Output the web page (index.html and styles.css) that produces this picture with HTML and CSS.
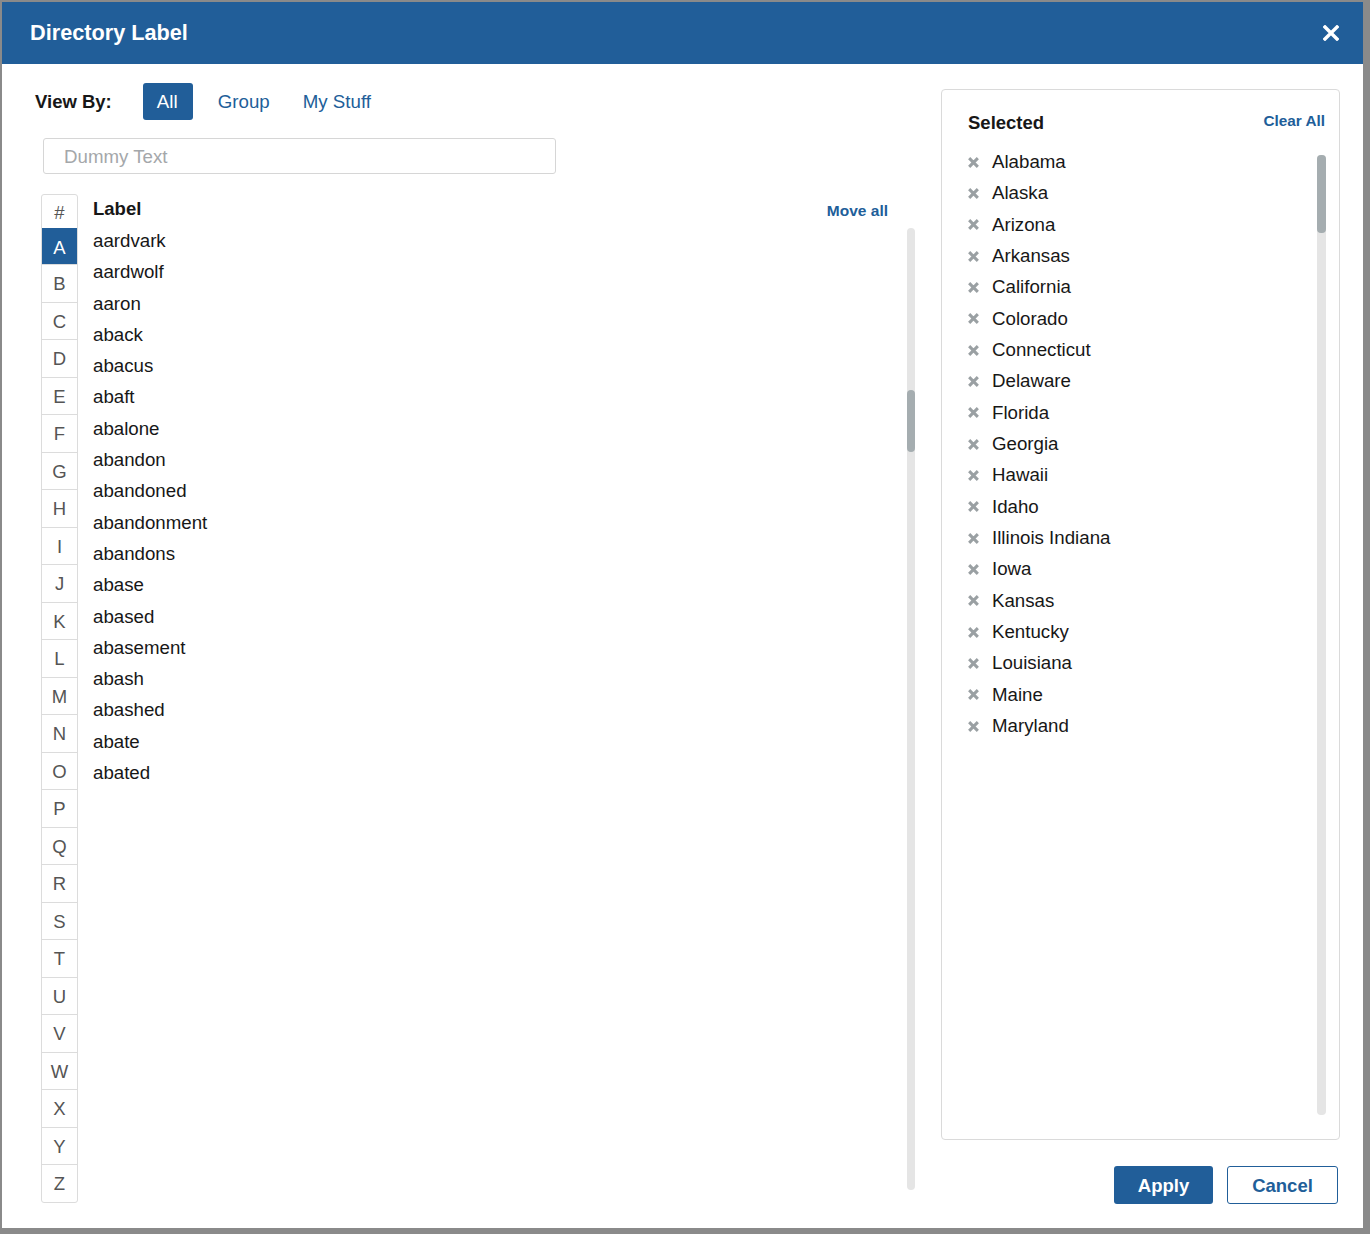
FILE: index.html
```html
<!DOCTYPE html>
<html>
<head>
<meta charset="utf-8">
<link rel="stylesheet" href="styles.css">
</head>
<body>
<div class="dialog">
  <div class="header">
    <div class="title">Directory Label</div>
    <svg class="close" width="16" height="16" viewBox="0 0 16 16"><path d="M2 2 L14 14 M14 2 L2 14" stroke="#fff" stroke-width="3.4" stroke-linecap="square"/></svg>
  </div>
  <div class="body">
    <div class="left">
      <div class="viewby">
        <span class="vb-label">View By:</span>
        <span class="tab active">All</span>
        <span class="tab">Group</span>
        <span class="tab">My Stuff</span>
      </div>
      <div class="search">Dummy Text</div>
      <div class="listarea">
        <div class="alpha">
          <div class="cell hash">#</div>
          <div class="cell active">A</div>
          <div class="cell">B</div><div class="cell">C</div><div class="cell">D</div><div class="cell">E</div>
          <div class="cell">F</div><div class="cell">G</div><div class="cell">H</div><div class="cell">I</div>
          <div class="cell">J</div><div class="cell">K</div><div class="cell">L</div><div class="cell">M</div>
          <div class="cell">N</div><div class="cell">O</div><div class="cell">P</div><div class="cell">Q</div>
          <div class="cell">R</div><div class="cell">S</div><div class="cell">T</div><div class="cell">U</div>
          <div class="cell">V</div><div class="cell">W</div><div class="cell">X</div><div class="cell">Y</div>
          <div class="cell">Z</div>
        </div>
        <div class="labels">
          <div class="labels-head"><span class="lh">Label</span><span class="moveall">Move all</span></div>
          <div class="row">aardvark</div>
          <div class="row">aardwolf</div>
          <div class="row">aaron</div>
          <div class="row">aback</div>
          <div class="row">abacus</div>
          <div class="row">abaft</div>
          <div class="row">abalone</div>
          <div class="row">abandon</div>
          <div class="row">abandoned</div>
          <div class="row">abandonment</div>
          <div class="row">abandons</div>
          <div class="row">abase</div>
          <div class="row">abased</div>
          <div class="row">abasement</div>
          <div class="row">abash</div>
          <div class="row">abashed</div>
          <div class="row">abate</div>
          <div class="row">abated</div>
        </div>
        <div class="scroll left-scroll"><div class="thumb"></div></div>
      </div>
    </div>
    <div class="right">
      <div class="panel">
        <div class="panel-head"><span class="sel">Selected</span><span class="clear">Clear All</span></div>
        <div class="panel-body">
          <div class="items">
            <div class="item"><svg class="x" viewBox="0 0 12 12"><path d="M2 2L10 10M10 2L2 10"/></svg>Alabama</div>
            <div class="item"><svg class="x" viewBox="0 0 12 12"><path d="M2 2L10 10M10 2L2 10"/></svg>Alaska</div>
            <div class="item"><svg class="x" viewBox="0 0 12 12"><path d="M2 2L10 10M10 2L2 10"/></svg>Arizona</div>
            <div class="item"><svg class="x" viewBox="0 0 12 12"><path d="M2 2L10 10M10 2L2 10"/></svg>Arkansas</div>
            <div class="item"><svg class="x" viewBox="0 0 12 12"><path d="M2 2L10 10M10 2L2 10"/></svg>California</div>
            <div class="item"><svg class="x" viewBox="0 0 12 12"><path d="M2 2L10 10M10 2L2 10"/></svg>Colorado</div>
            <div class="item"><svg class="x" viewBox="0 0 12 12"><path d="M2 2L10 10M10 2L2 10"/></svg>Connecticut</div>
            <div class="item"><svg class="x" viewBox="0 0 12 12"><path d="M2 2L10 10M10 2L2 10"/></svg>Delaware</div>
            <div class="item"><svg class="x" viewBox="0 0 12 12"><path d="M2 2L10 10M10 2L2 10"/></svg>Florida</div>
            <div class="item"><svg class="x" viewBox="0 0 12 12"><path d="M2 2L10 10M10 2L2 10"/></svg>Georgia</div>
            <div class="item"><svg class="x" viewBox="0 0 12 12"><path d="M2 2L10 10M10 2L2 10"/></svg>Hawaii</div>
            <div class="item"><svg class="x" viewBox="0 0 12 12"><path d="M2 2L10 10M10 2L2 10"/></svg>Idaho</div>
            <div class="item"><svg class="x" viewBox="0 0 12 12"><path d="M2 2L10 10M10 2L2 10"/></svg>Illinois Indiana</div>
            <div class="item"><svg class="x" viewBox="0 0 12 12"><path d="M2 2L10 10M10 2L2 10"/></svg>Iowa</div>
            <div class="item"><svg class="x" viewBox="0 0 12 12"><path d="M2 2L10 10M10 2L2 10"/></svg>Kansas</div>
            <div class="item"><svg class="x" viewBox="0 0 12 12"><path d="M2 2L10 10M10 2L2 10"/></svg>Kentucky</div>
            <div class="item"><svg class="x" viewBox="0 0 12 12"><path d="M2 2L10 10M10 2L2 10"/></svg>Louisiana</div>
            <div class="item"><svg class="x" viewBox="0 0 12 12"><path d="M2 2L10 10M10 2L2 10"/></svg>Maine</div>
            <div class="item"><svg class="x" viewBox="0 0 12 12"><path d="M2 2L10 10M10 2L2 10"/></svg>Maryland</div>
          </div>
          <div class="scroll right-scroll"><div class="thumb"></div></div>
        </div>
      </div>
      <div class="buttons">
        <span class="btn apply">Apply</span>
        <span class="btn cancel">Cancel</span>
      </div>
    </div>
  </div>
</div>
</body>
</html>
```
FILE: styles.css
```css
html, body {
  margin: 0;
  padding: 0;
}
body {
  background: #8a8a8a;
  width: 1370px;
  height: 1234px;
  padding: 2px 0 0 2px;
  box-sizing: border-box;
  font-family: "Liberation Sans", Arial, sans-serif;
  color: #171717;
  font-size: 18.7px;
}
.dialog {
  width: 1361px;
  height: 1226px;
  background: #fff;
  display: flex;
  flex-direction: column;
}
.header {
  height: 62px;
  background: #215e99;
  display: flex;
  align-items: center;
  justify-content: space-between;
  padding: 0 24px 0 28px;
  flex-shrink: 0;
}
.title {
  color: #fff;
  font-weight: bold;
  font-size: 21.7px;
  margin-top: -1px;
}
.close {
  display: block;
}
.body {
  display: flex;
  padding: 19px 23px 0 33px;
}
.left {
  width: 882px;
  display: flex;
  flex-direction: column;
}
.viewby {
  display: flex;
  align-items: center;
  height: 37px;
}
.vb-label {
  font-weight: bold;
  font-size: 18.5px;
  margin-right: 31px;
}
.tab {
  color: #215e99;
  height: 37px;
  line-height: 37px;
  padding: 0 15px;
  border-radius: 3px;
  margin-right: 3px;
}
.tab.active {
  background: #215e99;
  color: #fff;
  padding: 0 15px 0 14px;
  width: 21px;
  margin-right: 10px;
}
.search {
  margin: 18px 0 0 8px;
  height: 34px;
  border: 1px solid #d6d6d6;
  border-radius: 3px;
  color: #a4a7aa;
  line-height: 35px;
  padding-left: 20px;
  width: 491px;
}
.listarea {
  display: flex;
  margin-top: 20px;
  margin-left: 6px;
}
.alpha {
  width: 35px;
  border: 1px solid #dcdcdc;
  border-radius: 3px;
  display: flex;
  flex-direction: column;
  overflow: hidden;
}
.cell {
  height: 37.5px;
  box-sizing: border-box;
  border-top: 1px solid #dcdcdc;
  display: flex;
  align-items: center;
  justify-content: center;
  color: #555;
  font-size: 18.5px;
  padding-top: 2px;
}
.cell.hash {
  height: 33px;
  border-top: none;
  padding-top: 3px;
}
.cell.active {
  background: #215e99;
  color: #fff;
  border-top: 1px solid #215e99;
  height: 36px;
}
.labels {
  margin-left: 15px;
  width: 795px;
}
.labels-head {
  height: 31px;
  display: flex;
  justify-content: space-between;
  align-items: center;
}
.lh {
  font-weight: bold;
  font-size: 18.5px;
  margin-top: -1px;
}
.moveall {
  color: #215e99;
  font-weight: bold;
  font-size: 15.5px;
  margin-top: 3px;
}
.row {
  height: 31.3px;
  line-height: 31.3px;
}
.scroll {
  width: 8px;
  background: #e5e5e5;
  border-radius: 4px;
  display: flex;
  flex-direction: column;
}
.thumb {
  background: #a5adb0;
  border-radius: 4px;
}
.left-scroll {
  margin-left: 19px;
  margin-top: 34px;
  height: 962px;
}
.left-scroll .thumb {
  margin-top: 162px;
  height: 62px;
}
.right {
  margin-left: 26px;
  margin-top: 6px;
  width: 400px;
  display: flex;
  flex-direction: column;
}
.panel {
  height: 1051px;
  box-sizing: border-box;
  border: 1px solid #dadada;
  border-radius: 4px;
  padding: 17px 13px 0 26px;
}
.panel-head {
  display: flex;
  justify-content: space-between;
  align-items: center;
  height: 32px;
  margin-bottom: 7px;
  padding-right: 1px;
}
.sel {
  font-weight: bold;
  font-size: 18.5px;
}
.clear {
  color: #215e99;
  font-weight: bold;
  font-size: 15.3px;
  margin-top: -4px;
}
.panel-body {
  display: flex;
  justify-content: space-between;
}
.items {
  display: flex;
  flex-direction: column;
}
.item {
  height: 31.33px;
  box-sizing: border-box;
  display: flex;
  align-items: center;
  padding-top: 1px;
}
.x {
  width: 13px;
  height: 13px;
  margin-left: -1px;
  margin-right: 12px;
  stroke: #9aa0a3;
  stroke-width: 2.8;
  fill: none;
}
.right-scroll {
  width: 9px;
  margin-top: 9px;
  height: 960px;
}
.right-scroll .thumb {
  height: 78px;
}
.buttons {
  display: flex;
  justify-content: flex-end;
  margin-top: 26px;
  gap: 14px;
  padding-right: 2px;
}
.btn {
  height: 38px;
  box-sizing: border-box;
  border-radius: 3px;
  font-weight: bold;
  font-size: 18.5px;
  display: flex;
  align-items: center;
  justify-content: center;
  padding-top: 2px;
}
.apply {
  width: 99px;
  background: #215e99;
  color: #fff;
}
.cancel {
  width: 111px;
  border: 1.5px solid #215e99;
  color: #215e99;
  background: #fff;
}
```
